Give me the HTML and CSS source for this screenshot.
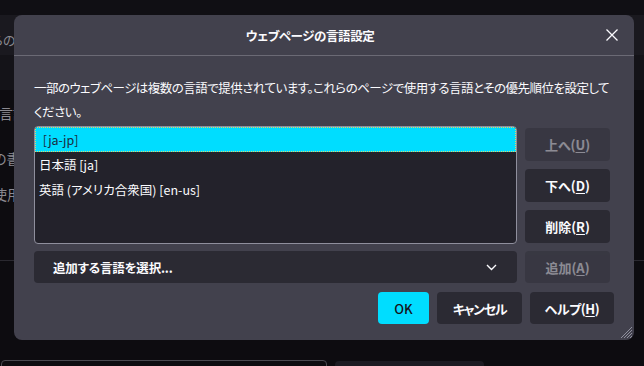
FILE: index.html
```html
<!DOCTYPE html>
<html lang="ja">
<head>
<meta charset="utf-8">
<title>ウェブページの言語設定</title>
<link rel="stylesheet" href="styles.css">
</head>
<body>
<div class="page">
  <div class="band-top"></div>
  <div class="band-title"><span class="bg-text">こちらの</span></div>
  <div class="band-sub"></div>
  <div class="bg-section">
    <p class="bg-line l1">言語</p>
    <p class="bg-line l2">の書</p>
    <p class="bg-line l3">使用</p>
  </div>
  <div class="bg-rule"></div>
  <div class="bg-controls">
    <div class="bg-box"></div>
    <div class="bg-fill"></div>
  </div>
</div>

<div class="dialog">
  <div class="dlg-header">
    <div class="dlg-title">ウェブページの言語設定</div>
    <button class="close-btn" aria-label="閉じる">
      <svg width="12" height="12" viewBox="0 0 12 12"><path d="M0.5 0.5 L11.5 11.5 M11.5 0.5 L0.5 11.5" stroke="#fbfbfe" stroke-width="1.3" fill="none"/></svg>
    </button>
  </div>
  <div class="dlg-body">
    <p class="desc">一部のウェブページは複数の言語で提供されています。これらのページで使用する言語とその優先順位を設定してください。</p>
    <div class="list-row">
      <div class="listbox">
        <div class="item selected">&nbsp;[ja-jp]</div>
        <div class="item">日本語 [ja]</div>
        <div class="item">英語 (アメリカ合衆国) [en-us]</div>
      </div>
      <div class="side">
        <button class="btn disabled">上へ(<u>U</u>)</button>
        <button class="btn">下へ(<u>D</u>)</button>
        <button class="btn">削除(<u>R</u>)</button>
      </div>
    </div>
    <div class="add-row">
      <div class="select">
        <span>追加する言語を選択...</span>
        <svg class="chev" width="11" height="7" viewBox="0 0 11 7"><path d="M1 1 L5.5 5.5 L10 1" stroke="#fbfbfe" stroke-width="1.4" fill="none"/></svg>
      </div>
      <button class="btn disabled side-btn">追加(<u>A</u>)</button>
    </div>
  </div>
  <div class="dlg-footer">
    <button class="btn primary">OK</button>
    <button class="btn wide kana">キャンセル</button>
    <button class="btn wide help">ヘルプ(<u>H</u>)</button>
  </div>
  <svg class="grip" width="14" height="14" viewBox="0 0 14 14">
    <path d="M13 2 L2 13 M13 5 L5 13 M13 8 L8 13 M13 11 L11 13" stroke="#8f8f9d" stroke-width="1" fill="none"/>
  </svg>
</div>
</body>
</html>
```

FILE: styles.css
```css
* { box-sizing: border-box; }
html, body { margin: 0; padding: 0; }
body {
  width: 644px;
  height: 366px;
  overflow: hidden;
  background: #0d0c10;
  font-family: "Noto Sans CJK JP", "Noto Sans", sans-serif;
  font-feature-settings: "palt";
  color: #fbfbfe;
  position: relative;
}

/* background page */
.page { width: 644px; }
.band-top { height: 15px; background: #100f14; }
.band-title {
  height: 40px;
  background: #1a191f;
  display: flex;
  align-items: center;
  overflow: hidden;
  white-space: nowrap;
}
.bg-text {
  color: #8b8a91;
  font-size: 13px;
  margin-left: -31px;
  margin-top: 9px;
}
.band-sub { height: 35px; background: #141318; }
.bg-section { height: 170px; padding-top: 12px; }
.bg-line {
  margin: 0;
  color: #8b8a91;
  font-size: 14px;
  line-height: 22px;
  white-space: nowrap;
}
.bg-line.l1 { margin-left: -1px; }
.bg-line.l2 { margin-top: 23px; margin-left: -7px; }
.bg-line.l3 { margin-top: 14px; margin-left: -7px; }
.bg-rule { height: 1px; background: #2a2930; }
.bg-controls { display: flex; gap: 8px; padding: 99px 0 0 1px; }
.bg-box {
  width: 326px; height: 20px;
  border: 1px solid #4a4950; border-radius: 4px;
}
.bg-fill {
  width: 149px; height: 20px; margin-top: 1px;
  background: #1c1b22; border-radius: 4px;
}

/* dialog */
.dialog {
  position: absolute;
  left: 14px;
  top: 15px;
  width: 620px;
  height: 325px;
  background: #42414d;
  border-radius: 8px;
  display: flex;
  flex-direction: column;
}
.dlg-header {
  height: 41px;
  border-bottom: 1px solid #6b6a75;
  display: flex;
  align-items: center;
  padding: 0 6px 0 10px;
}
.dlg-title {
  flex: 1;
  text-align: center;
  font-weight: 700;
  font-size: 12.5px;
  letter-spacing: -0.4px;
}
.close-btn {
  width: 32px; height: 32px;
  background: none; border: 0; padding: 0;
  display: flex; align-items: center; justify-content: center;
}
.dlg-body { padding: 20px 24px 0 20px; }
.desc {
  margin: 0;
  font-size: 12.5px;
  letter-spacing: -0.52px;
  line-height: 24px;
}
.list-row { display: flex; gap: 8px; margin-top: 2px; }
.listbox {
  flex: 1;
  height: 118px;
  background: #23222b;
  border: 1px solid #8f8f9d;
  border-radius: 4px;
  overflow: hidden;
}
.item {
  height: 25px;
  line-height: 25px;
  padding-left: 4px;
  font-size: 12.5px;
  white-space: nowrap;
}
.item.selected {
  background: #00ddff;
  color: #1c2a40;
  outline: 1px dotted #e3d36a;
  outline-offset: -1px;
  padding-left: 5px;
}
.side {
  width: 85px;
  display: flex;
  flex-direction: column;
  gap: 8px;
  padding-top: 2px;
}
.btn {
  font-family: inherit;
  font-feature-settings: "palt";
  font-size: 13px;
  font-weight: 700;
  color: #fbfbfe;
  background: #2b2a33;
  border: 0;
  border-radius: 4px;
  height: 33px;
  padding: 0;
}
.btn u { text-underline-offset: 2px; }
.btn.disabled { opacity: 0.4; }
.add-row { display: flex; gap: 8px; margin-top: 7px; }
.select {
  flex: 1;
  height: 32px;
  background: #2b2a33;
  border-radius: 4px;
  display: flex;
  align-items: center;
  justify-content: space-between;
  padding: 0 20px 0 19px;
  font-size: 12.5px;
  letter-spacing: -0.2px;
  font-weight: 700;
}
.side-btn { width: 85px; height: 32px; }
.dlg-footer {
  display: flex;
  justify-content: flex-end;
  gap: 8px;
  padding: 9px 20px 0 0;
}
.dlg-footer .btn { height: 32px; }
.btn.primary { width: 51px; background: #00ddff; color: #15141a; font-weight: 500; }
.btn.wide { width: 85px; }
.btn.help { width: 84px; letter-spacing: -0.4px; }
.btn.kana { letter-spacing: -1.3px; }
.grip { position: absolute; right: 1px; bottom: 1px; }
```
